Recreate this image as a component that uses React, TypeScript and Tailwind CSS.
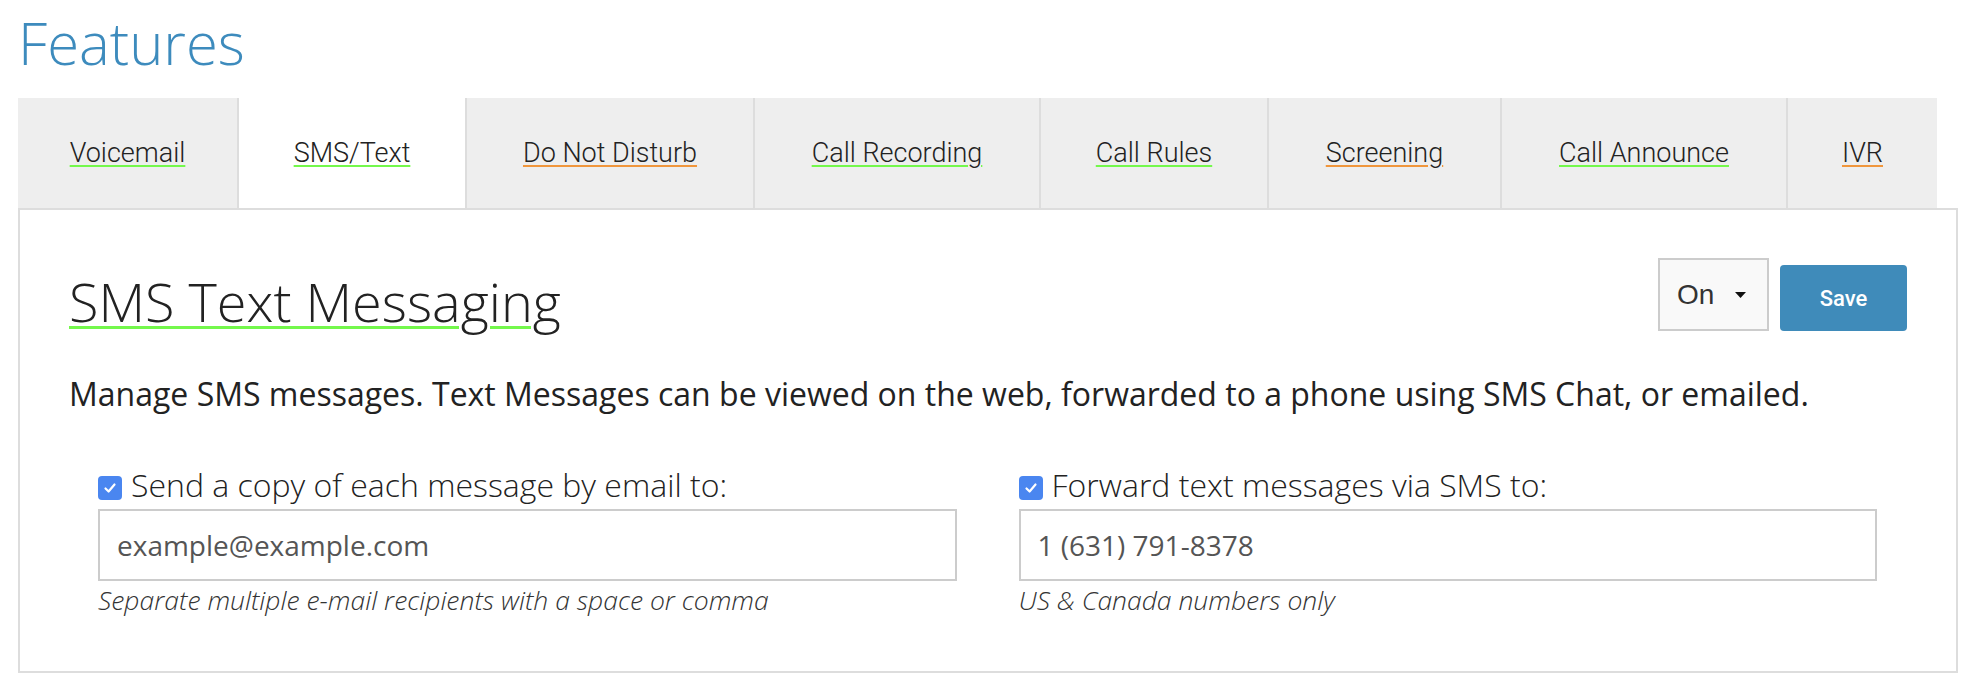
import React from "react";

type Tab = { label: string; width: string; line: string; active?: boolean };

const TABS: Tab[] = [
  { label: "Voicemail", width: "w-[221px]", line: "decoration-[#74f84c]" },
  { label: "SMS/Text", width: "w-[228px]", line: "decoration-[#74f84c]", active: true },
  { label: "Do Not Disturb", width: "w-[288px]", line: "decoration-[#f0963c]" },
  { label: "Call Recording", width: "w-[286px]", line: "decoration-[#74f84c]" },
  { label: "Call Rules", width: "w-[228px]", line: "decoration-[#74f84c]" },
  { label: "Screening", width: "w-[233px]", line: "decoration-[#f0963c]" },
  { label: "Call Announce", width: "w-[286px]", line: "decoration-[#74f84c]" },
  { label: "IVR", width: "w-[149px]", line: "decoration-[#f0963c]" },
];

function CheckBox() {
  return (
    <span className="flex h-[24px] w-[24px] shrink-0 items-center justify-center rounded-[4px] bg-[#4a86f0]">
      <svg width="14" height="14" viewBox="0 0 14 14" fill="none">
        <path d="M2.5 7.5 L5.6 10.5 L11.5 3.5" stroke="#fff" strokeWidth="2.2" strokeLinecap="round" strokeLinejoin="round" />
      </svg>
    </span>
  );
}

function Field({ label, value, help }: { label: string; value: string; help: string }) {
  return (
    <div className="flex flex-col">
      <label className="flex items-center gap-[9px] text-[32px] font-light leading-[40px] text-[#222]">
        <span className="mt-[6px]">
          <CheckBox />
        </span>
        {label}
      </label>
      <div className="mt-[4px] flex h-[72px] items-center border-2 border-[#cccccc] bg-white pl-[17px] text-[28px] text-[#555]">
        {value}
      </div>
      <p className="mt-[4px] text-[26.5px] font-light italic leading-[30px] text-[#333]">{help}</p>
    </div>
  );
}

export default function App() {
  return (
    <div className="min-h-screen bg-white pl-[18px]" style={{ fontFamily: '"Open Sans", "Liberation Sans", sans-serif' }}>
      <h1 className="pt-[14px] text-[58px] font-light leading-[58px] text-[#3d8bbd]">Features</h1>

      <div className="mt-[26px] w-[1940px]">
        {/* Tab strip */}
        <div className="flex h-[110px]" style={{ fontFamily: "Roboto, 'Liberation Sans', sans-serif" }}>
          {TABS.map((t, i) => (
            <div
              key={t.label}
              className={`flex items-center justify-center ${t.width} ${t.active ? "bg-white" : "bg-[#eeeeee]"} ${i < TABS.length - 1 ? "border-r-2 border-[#dddddd]" : ""}`}
            >
              <span className={`text-[27px] font-light text-[#222] underline decoration-2 underline-offset-[3px] ${t.line}`}>
                {t.label}
              </span>
            </div>
          ))}
        </div>

        {/* Panel */}
        <div className="border-2 border-[#dddddd] px-[49px] pb-[56px] pt-[48px]">
          <div className="flex items-start justify-between">
            <h2 className="mt-[16px] text-[54px] font-light leading-[54px] text-[#222] underline decoration-[#74f84c] decoration-[3px] underline-offset-[4px]">
              SMS Text Messaging
            </h2>
            <div className="flex items-end gap-[11px]" style={{ fontFamily: "'Liberation Sans', Arial, sans-serif" }}>
              <div className="flex h-[73px] w-[111px] items-center border-2 border-[#cccccc] bg-[#f9f9f9] pl-[17px] text-[28px] text-[#333]">
                <span>On</span>
                <svg className="ml-[21px]" width="11" height="6" viewBox="0 0 11 6">
                  <path d="M0 0 H11 L5.5 6 Z" fill="#111" />
                </svg>
              </div>
              <button
                className="h-[66px] w-[127px] rounded-[4px] bg-[#3f8bba] text-[22px] font-medium text-white"
                style={{ fontFamily: "Roboto, 'Liberation Sans', sans-serif" }}
              >
                Save
              </button>
            </div>
          </div>

          <p className="mt-[43px] text-[32px] leading-[40px] text-[#222]">
            Manage SMS messages. Text Messages can be viewed on the web, forwarded to a phone using SMS Chat, or emailed.
          </p>

          <div className="ml-[29px] mr-[30px] mt-[51px] grid grid-cols-2 gap-x-[62px]">
            <Field
              label="Send a copy of each message by email to:"
              value="example@example.com"
              help="Separate multiple e-mail recipients with a space or comma"
            />
            <Field label="Forward text messages via SMS to:" value="1 (631) 791-8378" help="US & Canada numbers only" />
          </div>
        </div>
      </div>
    </div>
  );
}
